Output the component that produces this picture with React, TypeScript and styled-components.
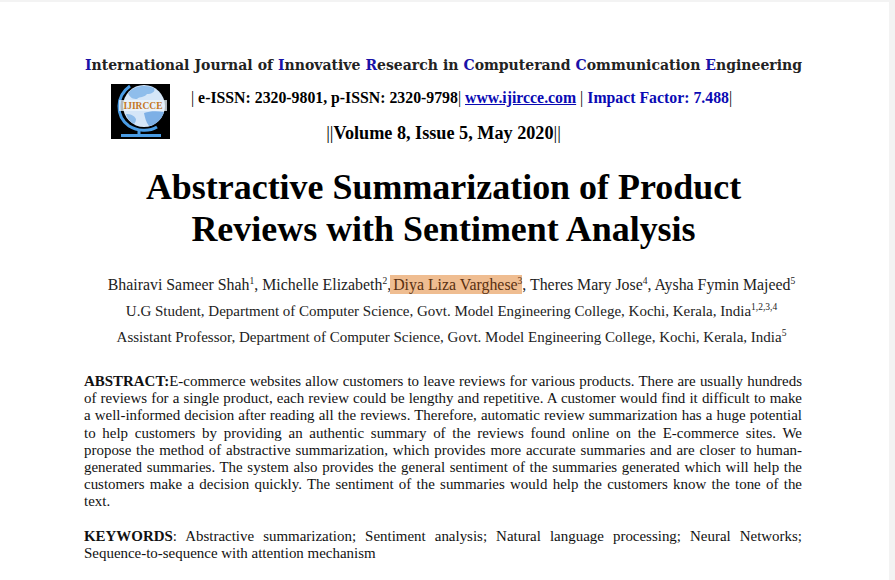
import React from 'react';
import {createGlobalStyle, styled} from 'styled-components';

const GlobalStyle = createGlobalStyle`
  html, body {
    margin: 0;
    height: 100%;
    overflow: hidden;
    background: #f3f3f3;
  }
`;

const JOURNAL_WORDS = [
  ['I', 'nternational'],
  ['', 'Journal'],
  ['', 'of'],
  ['I', 'nnovative'],
  ['R', 'esearch'],
  ['', 'in'],
  ['C', 'omputerand'],
  ['C', 'ommunication'],
  ['E', 'ngineering'],
];

// line breaks follow the PDF page
const ABSTRACT_LINES = [
  'E-commerce websites allow customers to leave reviews for various products. There are usually hundreds',
  'of reviews for a single product, each review could be lengthy and repetitive. A customer would find it difficult to make',
  'a well-informed decision after reading all the reviews. Therefore, automatic review summarization has a huge potential',
  'to help customers by providing an authentic summary of the reviews found online on the E-commerce sites. We',
  'propose the method of abstractive summarization, which provides more accurate summaries and are closer to human-',
  'generated summaries. The system also provides the general sentiment of the summaries generated which will help the',
  'customers make a decision quickly. The sentiment of the summaries would help the customers know the tone of the',
  'text.',
];

const Logo: React.FC = () => (
  <LogoBox>
    <svg width="59" height="55" viewBox="0 0 59 55">
      <rect width="59" height="55" fill="#000" />
      <circle cx="33" cy="22" r="21" fill="#d5e6f8" />
      <path d="M17 9c6-7 17-9 26-5 2 4-3 6-7 6-3 4-7 2-10 5-4 0-7-1-9-6z" fill="#8fbdeb" />
      <path d="M33 29c6-2 13-2 20-1-2 7-8 13-15 14-3-4-4-8-5-13z" fill="#7db0e6" />
      <path d="M15 30c4 0 8 1 10 5 0 2-1 4-2 5-4-2-7-6-8-10z" fill="#8fbdeb" />
      <path d="M19 2C5 12 4 32 18 42c8 5 20 6 28 1" fill="none" stroke="#4a9ce4" strokeWidth="3" />
      <path d="M28 46v5M10 51.5h40" stroke="#4a9ce4" strokeWidth="3" fill="none" />
      <rect x="8" y="16" width="48" height="11" fill="#eef5fc" opacity="0.75" />
      <text x="32" y="25" textAnchor="middle" fontFamily="'Liberation Serif', serif" fontWeight="700" fontSize="9.5" fill="#c4761f">
        IJIRCCE
      </text>
    </svg>
  </LogoBox>
);

export default function App() {
  return (
    <>
      <GlobalStyle />
      <Viewer>
        <Page>
          <JournalLine>
            {JOURNAL_WORDS.map(([initial, rest], i) => (
              <span key={i}>
                <Initial>{initial}</Initial>
                {rest}
              </span>
            ))}
          </JournalLine>
          <IssnRow>
            <Logo />
            <IssnText>
              <Thin>|</Thin> e-ISSN: 2320-9801, p-ISSN: 2320-9798<Thin>|</Thin>{' '}
              <BlueLink>www.ijircce.com</BlueLink> <Thin>|</Thin>{' '}
              <Blue>Impact Factor: 7.488</Blue>
              <Thin>|</Thin>
            </IssnText>
          </IssnRow>
          <VolumeLine>
            <Thin>||</Thin>Volume 8, Issue 5, May 2020<Thin>||</Thin>
          </VolumeLine>
          <Title>
            Abstractive Summarization of Product
            <br />
            Reviews with Sentiment Analysis
          </Title>
          <Authors>
            Bhairavi Sameer Shah<sup>1</sup>, Michelle Elizabeth<sup>2</sup>,{' '}
            <Highlight>
              Diya Liza Varghese<sup>3</sup>
            </Highlight>
            , Theres Mary Jose<sup>4</sup>, Aysha Fymin Majeed<sup>5</sup>
          </Authors>
          <Affiliation>
            U.G Student, Department of Computer Science, Govt. Model Engineering College, Kochi, Kerala, India
            <sup>1,2,3,4</sup>
          </Affiliation>
          <Affiliation>
            Assistant Professor, Department of Computer Science, Govt. Model Engineering College, Kochi, Kerala, India
            <sup>5</sup>
          </Affiliation>
          <Abstract>
            {ABSTRACT_LINES.map((line, i) => (
              <BodyLine key={i} $last={i === ABSTRACT_LINES.length - 1}>
                {i === 0 && <strong>ABSTRACT:</strong>}
                {line}
              </BodyLine>
            ))}
          </Abstract>
          <Keywords>
            <BodyLine>
              <strong>KEYWORDS</strong>: Abstractive summarization; Sentiment analysis; Natural language processing;
              Neural Networks;
            </BodyLine>
            <BodyLine $last>Sequence-to-sequence with attention mechanism</BodyLine>
          </Keywords>
        </Page>
      </Viewer>
    </>
  );
}

const Viewer = styled.div`
  height: 580px;
  width: 895px;
  padding-top: 2px;
  box-sizing: border-box;
  overflow: hidden;
  background: #f3f3f3;
`;

const Page = styled.main`
  width: 889px;
  height: 578px;
  box-sizing: border-box;
  padding: 53px 87px 0 85px;
  background: #fff;
  color: #000;
  font-family: 'Liberation Serif', 'Times New Roman', serif;
  overflow: hidden;

  sup {
    font-size: 9.5px;
    line-height: 0;
    vertical-align: 6px;
  }
`;

const JournalLine = styled.div`
  display: flex;
  justify-content: space-between;
  height: 20px;
  font-family: 'DejaVu Serif', serif;
  font-size: 14px;
  font-weight: 700;
  line-height: 20px;
  color: #222;
  white-space: nowrap;
`;

const Initial = styled.span`
  color: #1a12a8;
`;

const IssnRow = styled.div`
  display: flex;
  align-items: flex-start;
  height: 55px;
  margin-top: 9px;
  padding-left: 26px;
`;

const LogoBox = styled.div`
  width: 59px;
  height: 55px;
  flex: none;
`;

const IssnText = styled.div`
  margin: 4px 0 0 21px;
  font-size: 15.8px;
  font-weight: 700;
  line-height: 20px;
  white-space: nowrap;
`;

const Thin = styled.span`
  font-weight: 400;
`;

const Blue = styled.span`
  color: #0a0ab4;
`;

const BlueLink = styled(Blue)`
  text-decoration: underline;
`;

const VolumeLine = styled.div`
  margin-top: -18px;
  font-size: 18.2px;
  font-weight: 700;
  line-height: 24px;
  text-align: center;
  white-space: nowrap;
`;

const Title = styled.h1`
  margin: 21px 0 0;
  font-size: 35.95px;
  font-weight: 700;
  line-height: 42px;
  text-align: center;
  white-space: nowrap;
`;

const Authors = styled.p`
  margin: 22px 0 0;
  padding-left: 16px;
  font-size: 15.87px;
  line-height: 26px;
  text-align: center;
  white-space: nowrap;
  color: #222;
`;

const Highlight = styled.span`
  padding: 1px 0 1px 3px;
  margin-left: -5px;
  background: #efbd91;
  color: #5a3010;
`;

const Affiliation = styled.p`
  margin: 0;
  padding-left: 16px;
  font-size: 15px;
  line-height: 26px;
  text-align: center;
  white-space: nowrap;
  color: #222;
`;

const Abstract = styled.div`
  margin: 23px 0 0 -1px;
  font-size: 14.95px;
  line-height: 17.2px;
  color: #111;
`;

const Keywords = styled(Abstract)`
  margin-top: 17px;
`;

const BodyLine = styled.div<{$last?: boolean}>`
  text-align: ${({$last}) => ($last ? 'left' : 'justify')};
  text-align-last: ${({$last}) => ($last ? 'left' : 'justify')};
  white-space: nowrap;
`;
